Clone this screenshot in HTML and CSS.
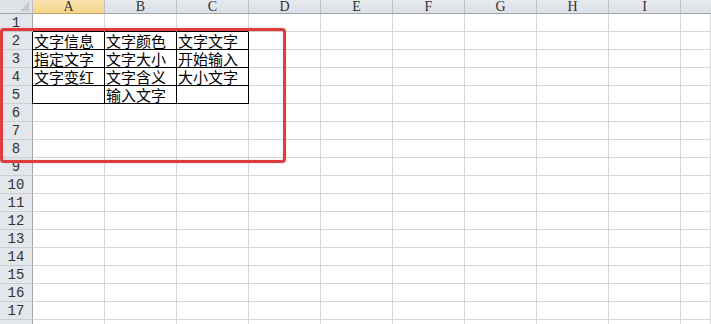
FILE: index.html
```html
<!DOCTYPE html>
<html>
<head>
<meta charset="utf-8">
<link rel="stylesheet" href="styles.css">
</head>
<body>
<div class="sheet">
  <div class="grid">
    <div class="corner"><span class="tri"></span></div>
    <div class="ch sel">A</div><div class="ch">B</div><div class="ch">C</div><div class="ch">D</div><div class="ch">E</div><div class="ch">F</div><div class="ch">G</div><div class="ch">H</div><div class="ch">I</div><div class="ch last"></div>

    <div class="rh">1</div><div class="c tb"></div><div class="c tb"></div><div class="c tb"></div><div class="c"></div><div class="c"></div><div class="c"></div><div class="c"></div><div class="c"></div><div class="c"></div><div class="c"></div>

    <div class="rh">2</div><div class="c b bl">文字信息</div><div class="c b">文字颜色</div><div class="c b">文字文字</div><div class="c"></div><div class="c"></div><div class="c"></div><div class="c"></div><div class="c"></div><div class="c"></div><div class="c"></div>

    <div class="rh">3</div><div class="c b bl">指定文字</div><div class="c b">文字大小</div><div class="c b">开始输入</div><div class="c"></div><div class="c"></div><div class="c"></div><div class="c"></div><div class="c"></div><div class="c"></div><div class="c"></div>

    <div class="rh">4</div><div class="c b bl">文字变红</div><div class="c b">文字含义</div><div class="c b">大小文字</div><div class="c"></div><div class="c"></div><div class="c"></div><div class="c"></div><div class="c"></div><div class="c"></div><div class="c"></div>

    <div class="rh">5</div><div class="c b bl"></div><div class="c b">输入文字</div><div class="c b"></div><div class="c"></div><div class="c"></div><div class="c"></div><div class="c"></div><div class="c"></div><div class="c"></div><div class="c"></div>

    <div class="rh">6</div><div class="c"></div><div class="c"></div><div class="c"></div><div class="c"></div><div class="c"></div><div class="c"></div><div class="c"></div><div class="c"></div><div class="c"></div><div class="c"></div>
    <div class="rh">7</div><div class="c"></div><div class="c"></div><div class="c"></div><div class="c"></div><div class="c"></div><div class="c"></div><div class="c"></div><div class="c"></div><div class="c"></div><div class="c"></div>
    <div class="rh">8</div><div class="c"></div><div class="c"></div><div class="c"></div><div class="c"></div><div class="c"></div><div class="c"></div><div class="c"></div><div class="c"></div><div class="c"></div><div class="c"></div>
    <div class="rh">9</div><div class="c"></div><div class="c"></div><div class="c"></div><div class="c"></div><div class="c"></div><div class="c"></div><div class="c"></div><div class="c"></div><div class="c"></div><div class="c"></div>
    <div class="rh">10</div><div class="c"></div><div class="c"></div><div class="c"></div><div class="c"></div><div class="c"></div><div class="c"></div><div class="c"></div><div class="c"></div><div class="c"></div><div class="c"></div>
    <div class="rh">11</div><div class="c"></div><div class="c"></div><div class="c"></div><div class="c"></div><div class="c"></div><div class="c"></div><div class="c"></div><div class="c"></div><div class="c"></div><div class="c"></div>
    <div class="rh">12</div><div class="c"></div><div class="c"></div><div class="c"></div><div class="c"></div><div class="c"></div><div class="c"></div><div class="c"></div><div class="c"></div><div class="c"></div><div class="c"></div>
    <div class="rh">13</div><div class="c"></div><div class="c"></div><div class="c"></div><div class="c"></div><div class="c"></div><div class="c"></div><div class="c"></div><div class="c"></div><div class="c"></div><div class="c"></div>
    <div class="rh">14</div><div class="c"></div><div class="c"></div><div class="c"></div><div class="c"></div><div class="c"></div><div class="c"></div><div class="c"></div><div class="c"></div><div class="c"></div><div class="c"></div>
    <div class="rh">15</div><div class="c"></div><div class="c"></div><div class="c"></div><div class="c"></div><div class="c"></div><div class="c"></div><div class="c"></div><div class="c"></div><div class="c"></div><div class="c"></div>
    <div class="rh">16</div><div class="c"></div><div class="c"></div><div class="c"></div><div class="c"></div><div class="c"></div><div class="c"></div><div class="c"></div><div class="c"></div><div class="c"></div><div class="c"></div>
    <div class="rh">17</div><div class="c"></div><div class="c"></div><div class="c"></div><div class="c"></div><div class="c"></div><div class="c"></div><div class="c"></div><div class="c"></div><div class="c"></div><div class="c"></div>
    <div class="rh"></div><div class="c"></div><div class="c"></div><div class="c"></div><div class="c"></div><div class="c"></div><div class="c"></div><div class="c"></div><div class="c"></div><div class="c"></div><div class="c"></div>
  </div>
  <div class="mark"></div>
</div>
</body>
</html>
```

FILE: styles.css
```css
html, body {
  margin: 0;
  padding: 0;
  background: #ffffff;
  overflow: hidden;
}

.sheet {
  position: relative;
  width: 711px;
  height: 324px;
  overflow: hidden;
}

.grid {
  display: grid;
  grid-template-columns: 33px repeat(9, 72px) 1fr;
  grid-template-rows: 14px repeat(18, 18px);
}

.grid > div {
  box-sizing: border-box;
}

.corner {
  position: relative;
  background: #dfe3e8;
  border-right: 1px solid #b7bec7;
  border-bottom: 1px solid #9ea6b0;
}

.tri {
  position: absolute;
  right: 3px;
  bottom: 2px;
  width: 0;
  height: 0;
  border-left: 9px solid transparent;
  border-bottom: 9px solid #c3c9d1;
}

.ch {
  background: linear-gradient(#e6e9ee, #dde1e7);
  border-right: 1px solid #b9c0c9;
  border-bottom: 1px solid #9ea6b0;
  font-family: "Liberation Serif", "DejaVu Serif", serif;
  font-size: 14px;
  line-height: 13px;
  color: #333;
  text-align: center;
}

.ch.sel {
  background: linear-gradient(#fbe3b0, #f6d488);
  border-bottom-color: #c2a36a;
}

.ch.last {
  border-right: none;
}

.rh {
  background: #e3e6eb;
  border-right: 1px solid #9ea6b0;
  border-bottom: 1px solid #c9ced5;
  font-family: "Liberation Mono", "DejaVu Sans Mono", monospace;
  font-size: 14px;
  line-height: 18px;
  color: #333;
  text-align: center;
}

.c {
  border-right: 1px solid #d6d6d6;
  border-bottom: 1px solid #d6d6d6;
  font-family: "Noto Sans CJK SC", "Noto Sans CJK JP", sans-serif;
  font-size: 15px;
  line-height: 17px;
  padding-left: 1px;
  color: #000;
  white-space: nowrap;
}

.c.tb {
  border-bottom-color: #000;
}

.c.b {
  border-right-color: #000;
  border-bottom-color: #000;
}

.c.bl {
  box-shadow: -1px 0 0 #000;
}

.mark {
  position: absolute;
  left: 0;
  top: 28px;
  width: 286px;
  height: 135px;
  box-sizing: border-box;
  border: 3px solid #e03c3e;
  border-radius: 4px;
  box-shadow: 0 0 1px rgba(224, 60, 62, 0.6), inset 0 0 1px rgba(224, 60, 62, 0.6);
  pointer-events: none;
}
```
